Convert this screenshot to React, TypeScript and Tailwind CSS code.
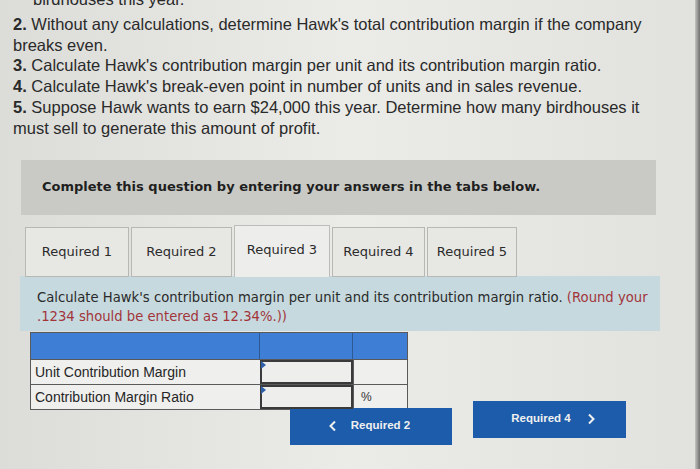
const sans = "font-['Liberation_Sans',Arial,sans-serif]";
const verdana = "font-['DejaVu_Sans',Verdana,sans-serif]";

const tabs = [
  { label: "Required 1", w: 104 },
  { label: "Required 2", w: 101 },
  { label: "Required 3", w: 96 },
  { label: "Required 4", w: 93 },
  { label: "Required 5", w: 90 },
];

function Tabs() {
  return (
    <div className="ml-[25px] flex items-end gap-[2px]">
      {tabs.map((t, i) => {
        const active = i === 2;
        return (
          <div
            key={t.label}
            style={{ width: t.w }}
            className={
              active
                ? "flex h-[52px] items-center justify-center border border-b-0 border-[#bcbcba] bg-[#ededeb] pb-[2px] text-[13px] text-[#2b2b2b]"
                : "flex h-[50px] items-center justify-center border border-[#b7b7b4] bg-[#e7e7e4] text-[13px] text-[#2b2b2b]"
            }
          >
            {t.label}
          </div>
        );
      })}
    </div>
  );
}

function InputCell() {
  return (
    <div className="relative h-full w-full border-[2px] border-[#3a3a3a] bg-[#eeeeec]">
      <span className="absolute left-[-1px] top-[-1px] h-0 w-0 border-y-[4px] border-l-[5px] border-y-transparent border-l-[#2d5fa8]" />
    </div>
  );
}

function AnswerTable() {
  const row = "grid h-[25px] grid-cols-[229px_93px_1fr] border-t border-[#5a5a5a] bg-[#efefed]";
  return (
    <div className={`ml-[30px] mt-[1px] w-[378px] border border-[#5a5a5a] ${sans}`}>
      <div className="grid h-[26px] grid-cols-[229px_93px_1fr] bg-[#3e7fd5]">
        <div className="border-r border-[#2d5a95]" />
        <div className="border-r border-[#2d5a95]" />
        <div />
      </div>
      <div className={row}>
        <div className="flex items-center pl-[4px] pt-[2px] text-[14px] text-[#262626]">Unit Contribution Margin</div>
        <InputCell />
        <div className="border-l border-[#5a5a5a]" />
      </div>
      <div className={row}>
        <div className="flex items-center pl-[4px] pt-[2px] text-[14px] text-[#262626]">Contribution Margin Ratio</div>
        <InputCell />
        <div className="flex items-center border-l border-[#5a5a5a] pl-[7px] text-[12px] text-[#333]">%</div>
      </div>
    </div>
  );
}

function NavButtons() {
  return (
    <div className={`-mt-[9px] ml-[290px] flex items-start gap-[21px] ${sans}`}>
      <button className="mt-[7px] flex h-[37px] w-[162px] items-center justify-center gap-[14px] bg-[#1c5caa] pr-[4px] text-[11.5px] font-bold text-[#f0f0f0]">
        <svg width="9" height="12" viewBox="0 0 9 12" fill="none" stroke="#f0f0f0" strokeWidth="2">
          <path d="M7 1.5 2.5 6 7 10.5" />
        </svg>
        Required 2
      </button>
      <button className="flex h-[37px] w-[153px] items-center justify-center gap-[16px] bg-[#1c5caa] pl-[8px] text-[11.5px] font-bold text-[#f0f0f0]">
        Required 4
        <svg width="9" height="12" viewBox="0 0 9 12" fill="none" stroke="#f0f0f0" strokeWidth="2">
          <path d="M2 1.5 6.5 6 2 10.5" />
        </svg>
      </button>
    </div>
  );
}

export default function App() {
  return (
    <div className="relative h-[469px] w-[700px] overflow-hidden bg-gradient-to-r from-[#dcdcd9] via-[#ebebe8] to-[#e1e1dd]">
      <div className={`whitespace-nowrap px-[13px] pt-[5px] text-[16.5px] leading-[20.8px] text-[#2a2a2a] ${sans}`}>
        <p className="mb-[4px] -mt-[16px] pl-[20px]">birdhouses this year.</p>
        <p>
          <b>2.</b> Without any calculations, determine Hawk's total contribution margin if the company
          <br />
          breaks even.
        </p>
        <p>
          <b>3.</b> Calculate Hawk's contribution margin per unit and its contribution margin ratio.
        </p>
        <p>
          <b>4.</b> Calculate Hawk's break-even point in number of units and in sales revenue.
        </p>
        <p>
          <b>5.</b> Suppose Hawk wants to earn $24,000 this year. Determine how many birdhouses it
          <br />
          must sell to generate this amount of profit.
        </p>
      </div>

      <div className={`ml-[21px] mt-[21px] flex h-[55px] w-[635px] items-center bg-[#c9cac5] pl-[21px] text-[13px] font-bold text-[#1f1f1f] ${verdana}`}>
        Complete this question by entering your answers in the tabs below.
      </div>

      <div className={`mt-[10px] ${verdana}`}>
        <Tabs />
        <div className="-mt-[1px] ml-[20px] w-[640px] whitespace-nowrap bg-[#c6d9de] pb-[5px] pl-[17px] pt-[12px] text-[13.2px] leading-[19px] text-[#2a2a2a]">
          Calculate Hawk's contribution margin per unit and its contribution margin ratio.{" "}
          <span className="text-[#a2343a]">
            (Round your
            <br />
            .1234 should be entered as 12.34%.))
          </span>
        </div>
      </div>

      <AnswerTable />
      <NavButtons />

      <div className="absolute right-0 top-0 h-full w-[5px] bg-gradient-to-r from-[#c4c4c1] to-[#6f6f6d]" />
    </div>
  );
}
